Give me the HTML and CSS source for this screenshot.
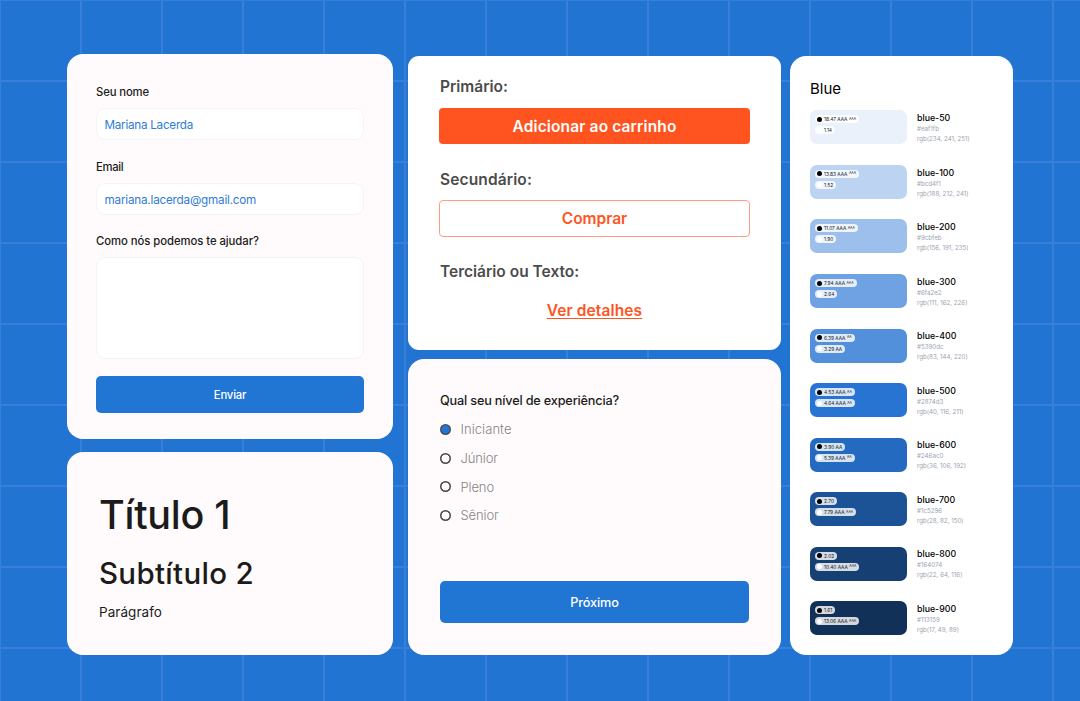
FILE: index.html
```html
<!DOCTYPE html>
<html lang="pt-BR">
<head>
<meta charset="utf-8">
<title>UI Kit</title>
<link rel="stylesheet" href="styles.css">
</head>
<body>
<main class="board">
  <div class="column column-form">
    <form class="card contact">
      <label class="label label-name">Seu nome</label>
      <div class="input input-name">Mariana Lacerda</div>
      <label class="label label-email">Email</label>
      <div class="input input-email">mariana.lacerda@gmail.com</div>
      <label class="label label-help">Como nós podemos te ajudar?</label>
      <div class="textarea"></div>
      <button type="button" class="btn-blue btn-send">Enviar</button>
    </form>
    <section class="card type">
      <h1 class="title">Título 1</h1>
      <h2 class="subtitle">Subtítulo 2</h2>
      <p class="paragraph">Parágrafo</p>
    </section>
  </div>
  <div class="column column-actions">
    <section class="card buttons">
      <h3 class="heading">Primário:</h3>
      <button type="button" class="cta cta-primary">Adicionar ao carrinho</button>
      <h3 class="heading heading-secondary">Secundário:</h3>
      <button type="button" class="cta cta-secondary">Comprar</button>
      <h3 class="heading">Terciário ou Texto:</h3>
      <a class="cta-text">Ver detalhes</a>
    </section>
    <section class="card survey">
      <p class="question">Qual seu nível de experiência?</p>
      <ul class="options">
        <li class="option option-first"><span class="radio radio-on"></span><span>Iniciante</span></li>
        <li class="option"><span class="radio"></span><span>Júnior</span></li>
        <li class="option"><span class="radio"></span><span>Pleno</span></li>
        <li class="option"><span class="radio"></span><span>Sênior</span></li>
      </ul>
      <button type="button" class="btn-blue btn-next">Próximo</button>
    </section>
  </div>
  <section class="card palette">
    <h2 class="palette-title">Blue</h2>
    <ul class="shades" id="shades"></ul>
  </section>
</main>
<script src="palette.js"></script>
</body>
</html>
```
FILE: styles.css
```css
* { box-sizing: border-box; }
body {
  margin: 0;
  width: 1080px;
  height: 701px;
  overflow: hidden;
  font-family: Inter, "Liberation Sans", sans-serif;
  color: #1b1b1b;
  background-color: #2274d3;
  background-image:
    linear-gradient(90deg, #377fd8 2px, transparent 2px),
    linear-gradient(#377fd8 2px, transparent 2px);
  background-size: 81px 81px;
  background-position: -1px -1px;
}
h1, h2, h3, p, ul { margin: 0; padding: 0; font-weight: inherit; }
ul { list-style: none; }
button { border: 0; padding: 0; font-family: inherit; }
.board { display: flex; align-items: flex-start; padding-left: 67px; }
.column { display: flex; flex-direction: column; }
.column-form { width: 326px; padding-top: 54px; gap: 13px; }
.column-actions { width: 373px; margin-left: 15px; padding-top: 56px; gap: 9px; }
.card { background: #fffbfc; border-radius: 16px; }

.contact { height: 385px; padding: 29px; display: flex; flex-direction: column; }
.contact > * { flex-shrink: 0; }
.label { font-size: 11.3px; font-weight: 500; line-height: 18px; margin-bottom: 7px; }
.label-name { letter-spacing: -.13px; }
.label-email { letter-spacing: -.31px; }
.label-help { letter-spacing: -.05px; }
.input {
  height: 32px; line-height: 34px; margin-bottom: 17.5px; padding-left: 8.5px;
  background: #fff; box-shadow: inset 0 0 0 1px #f5f3f5; border-radius: 9px;
  font-size: 11.7px; color: #2f7cd6;
}
.input-name { letter-spacing: -.26px; }
.input-email { letter-spacing: -.2px; }
.textarea { height: 102px; margin-bottom: 17px; background: #fff; box-shadow: inset 0 0 0 1px #f5f3f5; border-radius: 9px; }
.btn-blue { border-radius: 5px; background: #2175d3; color: #fff; font-weight: 500; }
.btn-send { height: 37px; padding-top: 1px; font-size: 11.3px; letter-spacing: -.18px; }

.type { height: 203px; padding: 37px 32px; }
.title { font-size: 39.5px; line-height: 52px; font-weight: 500; letter-spacing: -.3px; }
.subtitle { font-size: 29.5px; line-height: 38px; font-weight: 500; letter-spacing: .31px; margin-top: 13px; }
.paragraph { font-size: 13.5px; line-height: 20px; letter-spacing: .05px; margin-top: 10px; }

.buttons { height: 294px; padding: 20px 31px; display: flex; flex-direction: column; background: #fff; border-radius: 11px; }
.heading { font-size: 15.5px; line-height: 21px; font-weight: 600; color: #4b4b4b; margin: 0 0 11px 1px; }
.heading-secondary { margin-bottom: 10px; letter-spacing: .13px; }
.cta { height: 36px; margin-bottom: 25px; border-radius: 4px; font-size: 15.5px; font-weight: 600; }
.cta-primary { background: #ff541f; color: #fff; letter-spacing: .14px; }
.cta-secondary { height: 37px; margin-bottom: 24px; background: #fff; border: 1px solid #ff9d80; color: #ff541f; }
.cta-text {
  align-self: center; margin-top: 7px; line-height: 21px; font-size: 15.5px; font-weight: 600; letter-spacing: .11px;
  color: #ff541f; text-decoration: underline; text-decoration-thickness: 1px; text-underline-offset: 2px; text-decoration-skip-ink: none;
}

.survey { height: 296px; padding: 32px; display: flex; flex-direction: column; }
.question { font-size: 12.7px; line-height: 20px; font-weight: 500; letter-spacing: -.18px; }
.options { margin-top: 4px; }
.option { display: flex; align-items: center; gap: 9.5px; height: 28.7px; font-size: 13px; font-weight: 300; letter-spacing: -.12px; color: #858384; }
.option-first { letter-spacing: .06px; }
.radio { width: 11px; height: 11px; border-radius: 50%; background: radial-gradient(circle, transparent 3.6px, #4b4b4b 4.3px); }
.radio-on { background: radial-gradient(circle, #2175d3 3.8px, #4b4b4b 4.5px); }
.btn-next { height: 42px; margin-top: 51px; padding-top: 1px; font-size: 12.7px; letter-spacing: -.13px; }

.palette { width: 223px; height: 599px; margin: 56px 0 0 9px; padding: 22px 20px; background: #fff; border-radius: 16px; }
.palette-title { font-size: 15px; line-height: 21px; color: #000; }
.shades { margin-top: 11.4px; }
.shade { display: flex; gap: 10px; height: 54.55px; }
.swatch { width: 97px; height: 34px; border-radius: 7px; padding: 5px 4.5px; display: flex; flex-direction: column; align-items: flex-start; gap: 3px; }
.chip { display: flex; align-items: center; gap: 1.5px; height: 8px; padding: 0 3px 0 2.5px; border-radius: 4px; background: rgba(255, 255, 255, .82); font-size: 4.8px; line-height: 8px; color: #111; white-space: nowrap; }
.dot { width: 5px; height: 5px; margin-right: .5px; border-radius: 50%; }
.dot-black { background: #000; }
.dot-white { background: #fff; }
.chip-small { font-size: 3.4px; line-height: 6px; align-self: flex-start; padding-top: .5px; }
.shade-name { font-size: 8.8px; font-weight: 500; line-height: 12px; color: #000; margin-top: 1.6px; }
.shade-code { font-size: 6.2px; line-height: 10px; color: #9ca3af; }
```
FILE: palette.js
```js
const shades = [
  ['50', '#eaf1fb', '234, 241, 251', '18.47 AAA', 'AAA', '1.14', ''],
  ['100', '#bcd4f1', '188, 212, 241', '13.83 AAA', 'AAA', '1.52', ''],
  ['200', '#9cbfeb', '156, 191, 235', '11.07 AAA', 'AAA', '1.90', ''],
  ['300', '#6fa2e2', '111, 162, 226', '7.94 AAA', 'AAA', '2.64', ''],
  ['400', '#5390dc', '83, 144, 220', '6.39 AAA', 'AA', '3.29 AA', ''],
  ['500', '#2874d3', '40, 116, 211', '4.53 AAA', 'AA', '4.64 AAA', 'AA'],
  ['600', '#246ac0', '36, 106, 192', '3.90 AA', '', '5.39 AAA', 'AA'],
  ['700', '#1c5296', '28, 82, 150', '2.70', '', '7.79 AAA', 'AAA'],
  ['800', '#164074', '22, 64, 116', '2.02', '', '10.40 AAA', 'AAA'],
  ['900', '#113159', '17, 49, 89', '1.61', '', '13.06 AAA', 'AAA'],
];
const chip = (tone, text, small) =>
  `<div class="chip"><span class="dot dot-${tone}"></span><span>${text}</span>` +
  (small ? `<span class="chip-small">${small}</span>` : '') + '</div>';
document.getElementById('shades').innerHTML = shades.map(
  ([n, hex, rgb, b, bs, w, ws]) => `<li class="shade">
    <div class="swatch" style="background:${hex}">${chip('black', b, bs)}${chip('white', w, ws)}</div>
    <div><p class="shade-name">blue-${n}</p><p class="shade-code">${hex}</p><p class="shade-code">rgb(${rgb})</p></div>
  </li>`).join('');
```
